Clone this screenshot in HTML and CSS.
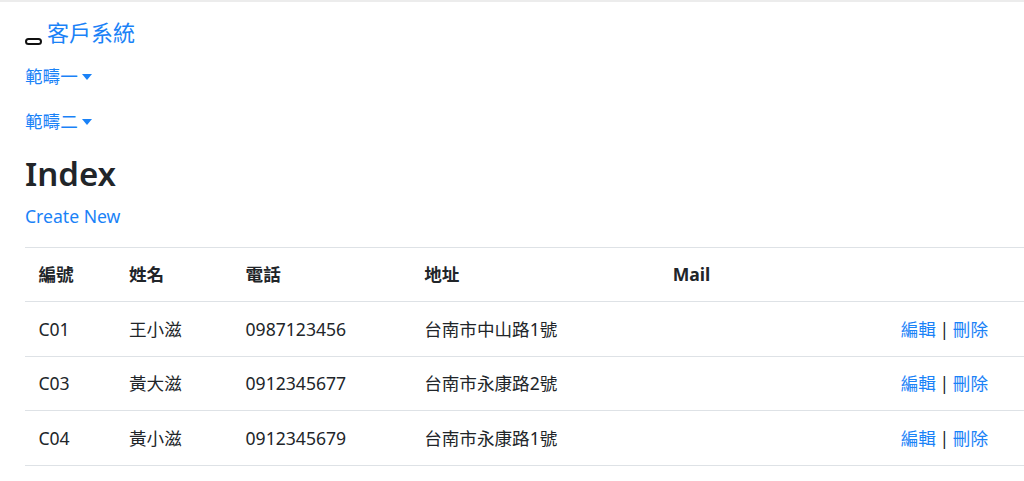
FILE: index.html
```html
<!DOCTYPE html>
<html lang="zh-Hant">
<head>
    <meta charset="UTF-8">
    <meta name="viewport" content="width=device-width, initial-scale=1.0">
    <title>Index - 客戶系統</title>
    <link rel="stylesheet" href="styles.css">
</head>
<body>
    <header class="navbar">
        <div class="brand-row">
            <button class="navbar-toggler" type="button"></button>
            <a class="navbar-brand" href="#">客戶系統</a>
        </div>
        <ul class="nav-list">
            <li><a class="nav-link dropdown-toggle" href="#">範疇一</a></li>
            <li><a class="nav-link dropdown-toggle" href="#">範疇二</a></li>
        </ul>
    </header>

    <main class="content">
        <h1>Index</h1>
        <p class="create"><a href="#">Create New</a></p>

        <table class="table">
            <thead>
                <tr>
                    <th class="col-id">編號</th>
                    <th class="col-name">姓名</th>
                    <th class="col-phone">電話</th>
                    <th class="col-addr">地址</th>
                    <th class="col-mail">Mail</th>
                    <th></th>
                </tr>
            </thead>
            <tbody>
                <tr>
                    <td>C01</td>
                    <td>王小滋</td>
                    <td>0987123456</td>
                    <td>台南市中山路1號</td>
                    <td></td>
                    <td class="actions"><a href="#">編輯</a> | <a href="#">刪除</a></td>
                </tr>
                <tr>
                    <td>C03</td>
                    <td>黃大滋</td>
                    <td>0912345677</td>
                    <td>台南市永康路2號</td>
                    <td></td>
                    <td class="actions"><a href="#">編輯</a> | <a href="#">刪除</a></td>
                </tr>
                <tr>
                    <td>C04</td>
                    <td>黃小滋</td>
                    <td>0912345679</td>
                    <td>台南市永康路1號</td>
                    <td></td>
                    <td class="actions"><a href="#">編輯</a> | <a href="#">刪除</a></td>
                </tr>
            </tbody>
        </table>
    </main>
</body>
</html>
```

FILE: styles.css
```css
body {
    margin: 0;
    font-family: "Noto Sans", "Noto Sans CJK TC", sans-serif;
    font-size: 17.6px;
    line-height: 1.5;
    color: #212529;
    background: #fff;
    border-top: 2px solid #ececec;
    overflow: hidden;
}
a {
    color: #1a82f7;
    text-decoration: none;
}

/* barra de navegação recolhida */
.navbar {
    padding: 14px 0 0 25px;
}
.brand-row {
    display: flex;
    align-items: flex-end;
    height: 33px;
    margin-bottom: 5px;
}
.navbar-toggler {
    width: 17px;
    height: 7px;
    padding: 0;
    margin: 0 5px 4px 0;
    border: 2px solid #111;
    border-radius: 4px;
    background: #fff;
}
.navbar-brand {
    font-size: 22px;
    line-height: 33px;
}
.nav-list {
    list-style: none;
    margin: 0;
    padding: 0;
}
.nav-list li {
    height: 45px;
}
.nav-link {
    display: inline-block;
    padding: 8.8px 0;
}
.dropdown-toggle::after {
    content: "";
    display: inline-block;
    margin-left: 4px;
    vertical-align: 3px;
    border-top: 6px solid #1a82f7;
    border-left: 5px solid transparent;
    border-right: 5px solid transparent;
}

/* conteúdo */
.content {
    padding: 0 0 0 25px;
}
h1 {
    margin: 10px 0 9px;
    font-size: 33px;
    font-weight: 600;
    line-height: 1.2;
}
.create {
    margin: 0 0 18px;
}
.table {
    width: 100%;
    border-collapse: collapse;
}
.table th,
.table td {
    padding: 13.5px 13.2px 13.5px 13.4px;
    border-top: 1px solid #dee2e6;
    text-align: left;
    vertical-align: top;
    white-space: nowrap;
}
.table tbody tr:last-child td {
    border-bottom: 1px solid #dee2e6;
}
.table th {
    font-weight: 700;
}
.col-id { width: 64px; }
.col-name { width: 90px; }
.col-phone { width: 152px; }
.col-addr { width: 222px; }
.col-mail { width: 200px; }
.table td.actions {
    text-align: right;
    padding-right: 36px;
    word-spacing: -1px;
}
```
